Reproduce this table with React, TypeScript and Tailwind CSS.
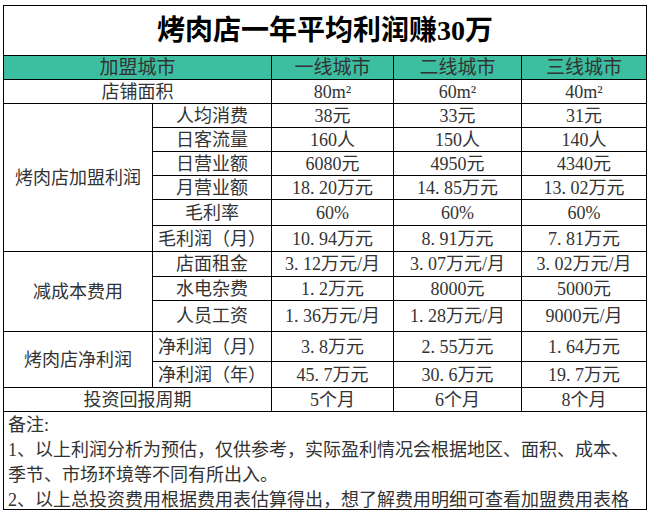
import React from 'react';

const FONT = "font-['Liberation_Serif','Noto_Sans_CJK_SC',serif]";

const profitRows = [
  ['人均消费', '38元', '33元', '31元'],
  ['日客流量', '160人', '150人', '140人'],
  ['日营业额', '6080元', '4950元', '4340元'],
  ['月营业额', '18.20万元', '14.85万元', '13.02万元'],
  ['毛利率', '60%', '60%', '60%'],
  ['毛利润（月）', '10.94万元', '8.91万元', '7.81万元'],
];

const costRows = [
  ['店面租金', '3.12万元/月', '3.07万元/月', '3.02万元/月'],
  ['水电杂费', '1.2万元', '8000元', '5000元'],
  ['人员工资', '1.36万元/月', '1.28万元/月', '9000元/月'],
];

const netRows = [
  ['净利润（月）', '3.8万元', '2.55万元', '1.64万元'],
  ['净利润（年）', '45.7万元', '30.6万元', '19.7万元'],
];

// SimSun style half-width dot: give it a full digit width
function Value({ text }: { text: string }) {
  const parts = text.split('.');
  return (
    <>
      {parts.map((p, i) => (
        <React.Fragment key={i}>
          {i > 0 && <span className="inline-block w-[9px]">.</span>}
          {p}
        </React.Fragment>
      ))}
    </>
  );
}

function Cell({
  children,
  className = '',
  head = false,
}: {
  children: React.ReactNode;
  className?: string;
  head?: boolean;
}) {
  return (
    <div
      className={`${head ? 'bg-[#3cbea0] text-[19px]' : 'bg-white'} flex items-center justify-center leading-[18px] whitespace-nowrap ${className}`}
    >
      {children}
    </div>
  );
}

export default function App() {
  return (
    <div className={`w-[651px] h-[515px] bg-white pt-[5px] pl-[3px] text-[18px] text-[#333] ${FONT}`}>
      <div className="grid w-[644px] bg-black gap-px p-px grid-cols-[148px_118px_121px_127px_124px] grid-rows-[49px_23px_23px_23px_23px_23px_23px_25px_25px_24px_23px_30px_29px_25px_23px_97px]">
        {/* Title */}
        <Cell className="col-span-5 text-[28px] font-bold text-black">烤肉店一年平均利润赚30万</Cell>

        {/* Header */}
        <Cell head className="col-span-2">加盟城市</Cell>
        <Cell head>一线城市</Cell>
        <Cell head>二线城市</Cell>
        <Cell head>三线城市</Cell>

        <Cell className="col-span-2">店铺面积</Cell>
        <Cell>80m²</Cell>
        <Cell>60m²</Cell>
        <Cell>40m²</Cell>

        <Cell className="row-span-6">烤肉店加盟利润</Cell>
        {profitRows.map((r) =>
          r.map((v, i) => (
            <Cell key={r[0] + i}>
              <Value text={v} />
            </Cell>
          ))
        )}

        <Cell className="row-span-3">减成本费用</Cell>
        {costRows.map((r) =>
          r.map((v, i) => (
            <Cell key={r[0] + i}>
              <Value text={v} />
            </Cell>
          ))
        )}

        <Cell className="row-span-2">烤肉店净利润</Cell>
        {netRows.map((r) =>
          r.map((v, i) => (
            <Cell key={r[0] + i}>
              <Value text={v} />
            </Cell>
          ))
        )}

        <Cell className="col-span-2">投资回报周期</Cell>
        <Cell>5个月</Cell>
        <Cell>6个月</Cell>
        <Cell>8个月</Cell>

        {/* Notes */}
        <div className="col-span-5 bg-white pl-[4px] pt-[1px] leading-[25px]">
          <div>备注:</div>
          <div>
            1、以上利润分析为预估，仅供参考，实际盈利情况会根据地区、面积、成本、
            <br />
            季节、市场环境等不同有所出入。
          </div>
          <div>2、以上总投资费用根据费用表估算得出，想了解费用明细可查看加盟费用表格</div>
        </div>
      </div>
    </div>
  );
}
